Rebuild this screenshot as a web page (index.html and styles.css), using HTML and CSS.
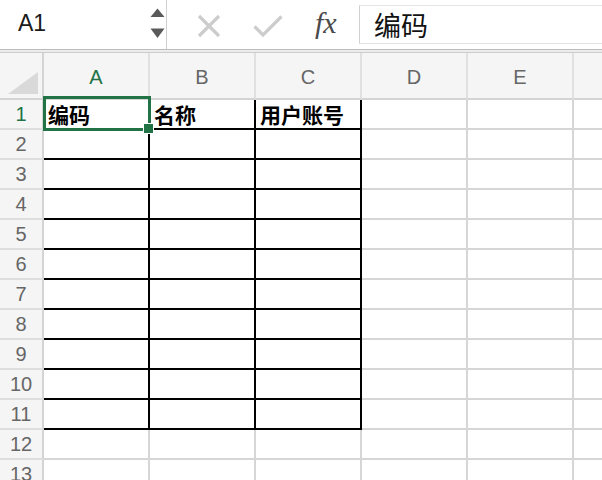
FILE: index.html
```html
<!DOCTYPE html>
<html lang="zh-CN">

<head>
	<title>Sheet</title>
	<meta charset="UTF-8">
	<meta name="viewport" content="width=device-width, initial-scale=1.0">
	<link rel="stylesheet" href="styles.css">
</head>

<body>
	<div class="formula-bar">
		<div class="name-box">
			<span class="name">A1</span>
			<svg class="spinner" width="15" height="32" viewBox="0 0 15 32">
				<polygon points="0.5,9 14.5,9 7.5,0.5" fill="#5a5a5a"/>
				<polygon points="0.5,20.5 14.5,20.5 7.5,30" fill="#5a5a5a"/>
			</svg>
		</div>
		<div class="actions">
			<svg class="icon-x" width="24" height="24" viewBox="0 0 24 24">
				<path d="M2 2 L22 22 M22 2 L2 22" stroke="#cccccc" stroke-width="3.2" fill="none"/>
			</svg>
			<svg class="icon-check" width="30" height="22" viewBox="0 0 30 22">
				<path d="M1.5 11.5 L10 20 L28.5 1.5" stroke="#cccccc" stroke-width="3.2" fill="none"/>
			</svg>
			<span class="fx">fx</span>
		</div>
		<div class="formula-input">编码</div>
	</div>
	<div class="bar-edge"></div>

	<div class="sheet">
		<div class="row head">
			<div class="rh corner">
				<svg width="42" height="45" viewBox="0 0 42 45">
					<polygon points="8,41 38,41 38,19" fill="#d9d9d9"/>
				</svg>
			</div>
			<div class="ch active">A</div>
			<div class="ch">B</div>
			<div class="ch">C</div>
			<div class="ch">D</div>
			<div class="ch">E</div>
			<div class="ch"></div>
		</div>

		<div class="row">
			<div class="rh active">1</div>
			<div class="cell b">编码</div>
			<div class="cell b">名称</div>
			<div class="cell b">用户账号</div>
			<div class="cell"></div><div class="cell"></div><div class="cell"></div>
		</div>
		<div class="row">
			<div class="rh">2</div>
			<div class="cell b"></div><div class="cell b"></div><div class="cell b"></div>
			<div class="cell"></div><div class="cell"></div><div class="cell"></div>
		</div>
		<div class="row">
			<div class="rh">3</div>
			<div class="cell b"></div><div class="cell b"></div><div class="cell b"></div>
			<div class="cell"></div><div class="cell"></div><div class="cell"></div>
		</div>
		<div class="row">
			<div class="rh">4</div>
			<div class="cell b"></div><div class="cell b"></div><div class="cell b"></div>
			<div class="cell"></div><div class="cell"></div><div class="cell"></div>
		</div>
		<div class="row">
			<div class="rh">5</div>
			<div class="cell b"></div><div class="cell b"></div><div class="cell b"></div>
			<div class="cell"></div><div class="cell"></div><div class="cell"></div>
		</div>
		<div class="row">
			<div class="rh">6</div>
			<div class="cell b"></div><div class="cell b"></div><div class="cell b"></div>
			<div class="cell"></div><div class="cell"></div><div class="cell"></div>
		</div>
		<div class="row">
			<div class="rh">7</div>
			<div class="cell b"></div><div class="cell b"></div><div class="cell b"></div>
			<div class="cell"></div><div class="cell"></div><div class="cell"></div>
		</div>
		<div class="row">
			<div class="rh">8</div>
			<div class="cell b"></div><div class="cell b"></div><div class="cell b"></div>
			<div class="cell"></div><div class="cell"></div><div class="cell"></div>
		</div>
		<div class="row">
			<div class="rh">9</div>
			<div class="cell b"></div><div class="cell b"></div><div class="cell b"></div>
			<div class="cell"></div><div class="cell"></div><div class="cell"></div>
		</div>
		<div class="row">
			<div class="rh">10</div>
			<div class="cell b"></div><div class="cell b"></div><div class="cell b"></div>
			<div class="cell"></div><div class="cell"></div><div class="cell"></div>
		</div>
		<div class="row">
			<div class="rh">11</div>
			<div class="cell b"></div><div class="cell b"></div><div class="cell b"></div>
			<div class="cell"></div><div class="cell"></div><div class="cell"></div>
		</div>
		<div class="row">
			<div class="rh">12</div>
			<div class="cell"></div><div class="cell"></div><div class="cell"></div>
			<div class="cell"></div><div class="cell"></div><div class="cell"></div>
		</div>
		<div class="row">
			<div class="rh">13</div>
			<div class="cell"></div><div class="cell"></div><div class="cell"></div>
			<div class="cell"></div><div class="cell"></div><div class="cell"></div>
		</div>

		<!-- selected cell A1 -->
		<div class="selection"></div>
		<div class="handle"></div>
	</div>
</body>

</html>
```

FILE: styles.css
```css
* {
	box-sizing: border-box;
}

html,
body {
	margin: 0;
	height: 100%;
	overflow: hidden;
	background: #fff;
	font-family: "Liberation Sans", "Noto Sans CJK SC", sans-serif;
}

/* Formula bar */
.formula-bar {
	display: flex;
	height: 49px;
	background: #fff;
}

.name-box {
	display: flex;
	align-items: center;
	width: 167px;
	padding: 0 0 2px 18px;
	border-right: 1px solid #cfcfcf;
}

.name {
	flex: 1;
	font-size: 23px;
	color: #1a1a1a;
}

.spinner {
	margin-right: 1px;
}

.actions {
	display: flex;
	align-items: center;
	width: 192px;
	padding-left: 30px;
}

.icon-x {
	margin-top: 2px;
}

.icon-check {
	margin-left: 32px;
	margin-top: 2px;
}

.fx {
	margin-left: 32px;
	font-family: "Liberation Serif", "DejaVu Serif", serif;
	font-style: italic;
	font-size: 30px;
	color: #4a4a4a;
	padding-bottom: 4px;
}

.formula-input {
	flex: 1;
	display: flex;
	align-items: center;
	height: 39px;
	margin-top: 5px;
	padding-left: 14px;
	border: 1px solid #e4e4e4;
	border-left-color: #d2d2d2;
	border-right: none;
	font-family: "Noto Sans CJK SC", sans-serif;
	font-size: 27px;
	color: #111;
}

.bar-edge {
	height: 4px;
	border-top: 1px solid #bdbdbd;
	border-bottom: 1px solid #cdcdcd;
	background: #ececec;
}

/* Sheet grid */
.sheet {
	position: relative;
	overflow: hidden;
}

.row {
	display: flex;
	height: 30px;
}

.row.head {
	height: 47px;
	background: #f5f5f5;
}

.rh {
	flex: none;
	display: flex;
	align-items: center;
	justify-content: center;
	width: 44px;
	background: #f5f5f5;
	border-right: 2px solid #d4d4d4;
	border-bottom: 2px solid #dedede;
	font-size: 20px;
	color: #666;
}

.rh.corner {
	border-bottom-color: #d4d4d4;
	align-items: flex-start;
	justify-content: flex-start;
}

.ch {
	flex: none;
	display: flex;
	align-items: center;
	justify-content: center;
	width: 106px;
	padding-top: 4px;
	border-right: 2px solid #e0e0e0;
	border-bottom: 2px solid #d4d4d4;
	font-size: 20px;
	color: #666;
}

.active {
	color: #217346;
}

.cell {
	flex: none;
	display: flex;
	align-items: center;
	width: 106px;
	padding-left: 4px;
	border-right: 2px solid #d6d6d6;
	border-bottom: 2px solid #d6d6d6;
	font-family: "Noto Sans CJK SC", sans-serif;
	font-weight: bold;
	font-size: 21px;
	color: #000;
}

.cell.b {
	border-color: #000;
}

.selection {
	position: absolute;
	left: 43px;
	top: 43px;
	width: 108px;
	height: 35px;
	border: 3px solid #217346;
}

.handle {
	position: absolute;
	left: 143px;
	top: 70px;
	width: 11px;
	height: 11px;
	background: #217346;
	border: 1px solid #fff;
}
```
